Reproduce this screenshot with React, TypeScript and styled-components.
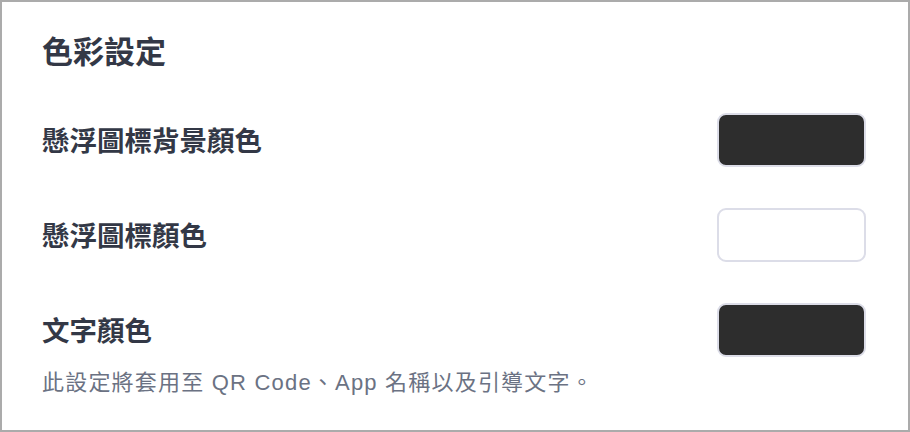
import React from "react";
import styled, { createGlobalStyle } from "styled-components";

const Global = createGlobalStyle`
  html, body { margin: 0; padding: 0; background: #ffffff; }
  body { font-family: "Noto Sans CJK TC", "Noto Sans", Inter, sans-serif; }
`;

const Frame = styled.div`
  box-sizing: border-box;
  width: 910px;
  height: 432px;
  border: 2px solid #ababab;
  background: #ffffff;
  padding: 28px 42px 0 40px;
  display: flex;
  flex-direction: column;
`;

const Title = styled.h2`
  margin: 0 0 43px 0;
  font-size: 31px;
  line-height: 40px;
  font-weight: 700;
  color: #333846;
`;

const Rows = styled.div`
  display: flex;
  flex-direction: column;
  gap: 41px;
`;

const Row = styled.div`
  display: flex;
  align-items: center;
  justify-content: space-between;
  height: 54px;
`;

const Label = styled.span`
  font-size: 27.5px;
  font-weight: 700;
  color: #333846;
  line-height: 1;
`;

const Swatch = styled.div<{ $color: string }>`
  box-sizing: border-box;
  width: 149px;
  height: 54px;
  border-radius: 9px;
  border: 2px solid #dcdde8;
  background: ${(p) => p.$color};
`;

const Note = styled.p`
  margin: 13px 0 0 0;
  font-family: "Liberation Sans", "Noto Sans CJK TC", sans-serif;
  font-size: 22px;
  letter-spacing: 1.2px;
  line-height: 26px;
  color: #6b7283;
`;

const rows = [
  { label: "懸浮圖標背景顏色", color: "#2d2d2d" },
  { label: "懸浮圖標顏色", color: "#ffffff" },
  { label: "文字顏色", color: "#2d2d2d" },
];

export default function App() {
  return (
    <>
      <Global />
      <Frame>
        <Title>色彩設定</Title>
        <Rows>
          {rows.map((r) => (
            <Row key={r.label}>
              <Label>{r.label}</Label>
              <Swatch $color={r.color} />
            </Row>
          ))}
        </Rows>
        <Note>此設定將套用至 QR Code、App 名稱以及引導文字。</Note>
      </Frame>
    </>
  );
}
